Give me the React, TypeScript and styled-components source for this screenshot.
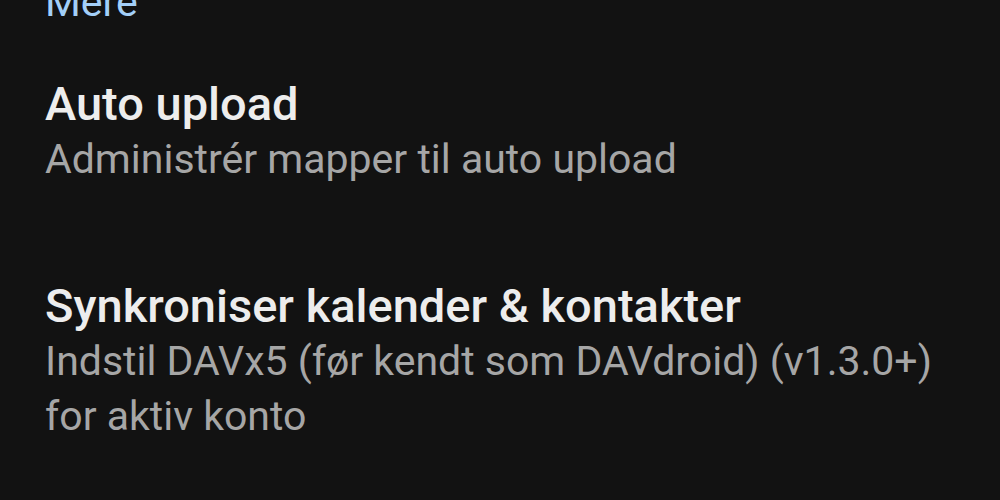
import styled, { createGlobalStyle } from 'styled-components';

const GlobalStyle = createGlobalStyle`
html, body {
  margin: 0;
  padding: 0;
  background: #121212;
}
body {
  font-family: Roboto, "Noto Sans", sans-serif;
  -webkit-font-smoothing: antialiased;
}
`

const Screen = styled.div`
width: 1000px;
height: 500px;
overflow: hidden;
background: #121212;
`

const List = styled.div`
display: flex;
flex-direction: column;
margin-top: -25px;
padding: 0 45px;
`

const MoreLink = styled.a`
font-size: 41px;
line-height: 55px;
color: #a3cff8;
text-decoration: none;
`

const Item = styled.div`
display: flex;
flex-direction: column;
padding-top: ${(p: { $gap: number }) => p.$gap}px;
`

const Title = styled.div`
font-size: 47px;
font-weight: 500;
line-height: 56px;
color: #ededed;
`

const Summary = styled.div`
font-size: 41px;
line-height: 55px;
color: #a6a6a6;
`

const items = [
    { title: 'Auto upload', summary: ['Administrér mapper til auto upload'], gap: 46 },
    { title: 'Synkroniser kalender & kontakter', summary: ['Indstil DAVx5 (før kendt som DAVdroid) (v1.3.0+)', 'for aktiv konto'], gap: 91 },
]

export default function App() {
    return (
        <Screen>
            <GlobalStyle />
            <List>
                <MoreLink href="#">Mere</MoreLink>
                {items.map((item) => (
                    <Item key={item.title} $gap={item.gap}>
                        <Title>{item.title}</Title>
                        {item.summary.map((line) => <Summary key={line}>{line}</Summary>)}
                    </Item>
                ))}
            </List>
        </Screen>
    )
}
